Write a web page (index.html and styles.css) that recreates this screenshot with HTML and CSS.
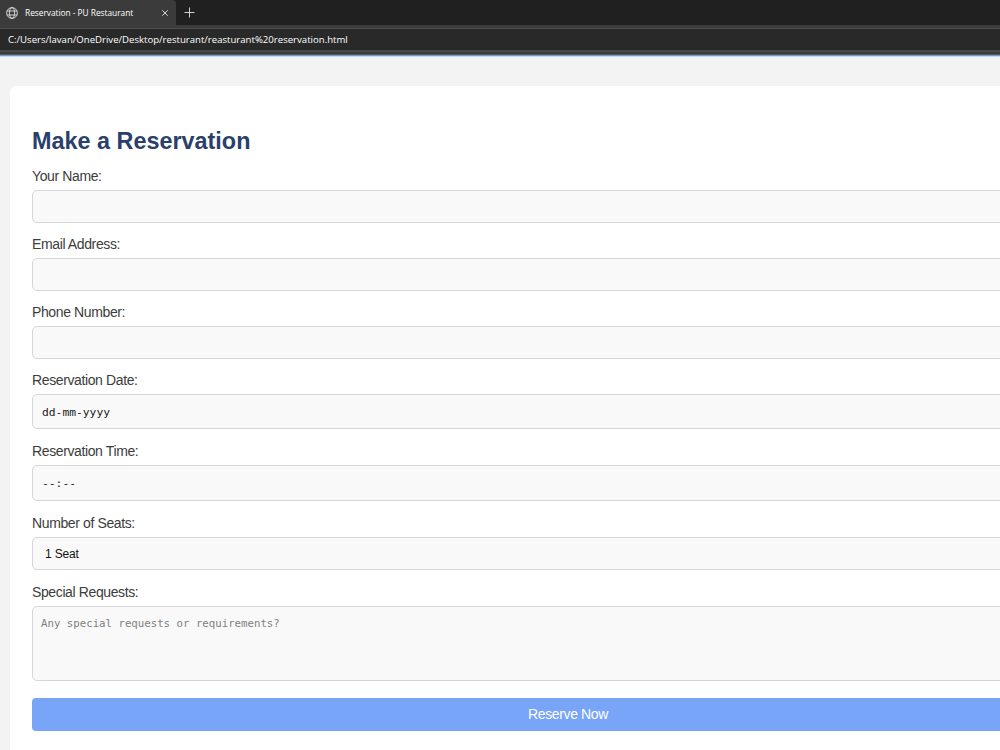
FILE: index.html
```html
<!DOCTYPE html>
<html lang="en">

<head>
  <meta charset="UTF-8">
  <meta name="viewport" content="width=device-width, initial-scale=1.0">
  <title>Reservation - PU Restaurant</title>
  <link rel="stylesheet" href="styles.css">
</head>

<body>
  <div class="tabs">
    <div class="tab">
      <svg class="globe" viewBox="0 0 12 12" fill="none" stroke="#e0e0e0" stroke-width="0.9">
        <circle cx="6" cy="6" r="5.4" />
        <ellipse cx="6" cy="6" rx="2.6" ry="5.4" />
        <path d="M1.1 4h9.8M1.1 8h9.8" />
      </svg>
      <span class="tab-title">Reservation - PU Restaurant</span>
      <svg class="close" viewBox="0 0 6 6" fill="none" stroke="#d8d8d8">
        <path d="M0.3 0.3l5.4 5.4M5.7 0.3l-5.4 5.4" />
      </svg>
    </div>
    <svg class="new-tab" viewBox="0 0 11 11" fill="none" stroke="#d0d0d0">
      <path d="M5.5 0.5v10M0.5 5.5h10" />
    </svg>
  </div>
  <div class="address"><span class="url">C:/Users/lavan/OneDrive/Desktop/resturant/reasturant%20reservation.html</span></div>
  <div class="address-edge"></div>

  <main class="container">
    <h1>Make a Reservation</h1>
    <form class="form">
      <label for="name">Your Name:</label>
      <input type="text" id="name">

      <label for="email">Email Address:</label>
      <input type="email" id="email">

      <label for="phone">Phone Number:</label>
      <input type="tel" id="phone">

      <label for="date">Reservation Date:</label>
      <input type="text" id="date" class="date" value="dd-mm-yyyy">

      <label for="time">Reservation Time:</label>
      <input type="text" id="time" class="time" value="--:--">

      <label for="seats">Number of Seats:</label>
      <select id="seats" class="seats">
        <option>1 Seat</option>
      </select>

      <label for="requests">Special Requests:</label>
      <textarea id="requests" placeholder="Any special requests or requirements?"></textarea>

      <button type="submit">Reserve Now</button>
    </form>
  </main>
</body>

</html>
```

FILE: styles.css
```css
* {
  box-sizing: border-box;
}

html {
  overflow: hidden;
}

body {
  margin: 0;
  height: 750px;
  overflow: hidden;
  background-color: #f3f3f3;
  font-family: "Liberation Sans", Arial, sans-serif;
}

/* browser bar */
.tabs {
  display: flex;
  align-items: center;
  height: 25px;
  background-color: #202020;
}

.tab {
  display: flex;
  align-items: center;
  width: 176px;
  height: 25px;
  padding: 0 8px 0 6px;
  background-color: #3b3b3b;
  border-radius: 0 4px 0 0;
}

.globe {
  width: 12px;
  height: 12px;
  margin-right: 7px;
}

.tab-title {
  color: #fff;
  font-family: "Open Sans", sans-serif;
  font-size: 8.4px;
  letter-spacing: -0.04px;
  white-space: nowrap;
}

.close {
  width: 6px;
  height: 6px;
  margin-left: auto;
}

.new-tab {
  width: 11px;
  height: 11px;
  margin-left: 8px;
}

.address {
  display: flex;
  align-items: center;
  height: 25px;
  padding-left: 8px;
  background-color: #292929;
  border-top: 3px solid #3b3b3b;
  box-shadow: inset 0 1px #4e4e4e;
}

.url {
  color: #fff;
  font-family: "Open Sans", sans-serif;
  font-size: 9.6px;
  white-space: nowrap;
}

.address-edge {
  height: 7px;
  background: linear-gradient(#484848 2px, #3b3b3b 2px, #3b3b3b 4px, #55585e 4px, #55585e 5px, #7196d6 5px, #7196d6 6px, #c0d6fb 6px);
}

/* reservation form */
.container {
  width: 1116px;
  height: 680px;
  margin: 29px 0 0 10px;
  padding: 41px 22px 0;
  background-color: #fff;
  border-radius: 6px;
}

h1 {
  margin: 0 0 13px;
  color: #2a3f6c;
  font-size: 23.4px;
  line-height: 28px;
}

.form {
  display: flex;
  flex-direction: column;
}

label {
  margin-bottom: 6px;
  color: #3c3c3c;
  font-size: 14px;
  line-height: 16px;
  letter-spacing: -0.38px;
}

input,
select,
textarea {
  width: 100%;
  height: 33px;
  margin: 0 0 13px;
  padding: 0 9px;
  color: #222;
  background-color: #f9f9f9;
  border: 1px solid #d6d6d6;
  border-radius: 5px;
  outline: none;
}

.date,
.time {
  height: 35px;
  margin-bottom: 14px;
  font-family: "DejaVu Sans Mono", monospace;
  font-size: 11.3px;
}

.date {
  padding-top: 1px;
}

.time {
  height: 36px;
}

.seats {
  margin-bottom: 14px;
  padding-left: 12px;
  color: #111;
  font-family: "Liberation Sans", Arial, sans-serif;
  font-size: 12px;
  letter-spacing: -0.15px;
  appearance: none;
}

textarea {
  height: 75px;
  margin-bottom: 17px;
  padding: 10px 8px;
  font-family: "DejaVu Sans Mono", monospace;
  font-size: 10.73px;
  resize: none;
}

textarea::placeholder {
  color: #808080;
}

button {
  height: 33px;
  padding: 0 0 1px;
  color: #fff;
  background-color: #78a5f7;
  border: none;
  border-radius: 4px;
  font-family: "Liberation Sans", Arial, sans-serif;
  font-size: 14px;
  letter-spacing: -0.38px;
}
```
